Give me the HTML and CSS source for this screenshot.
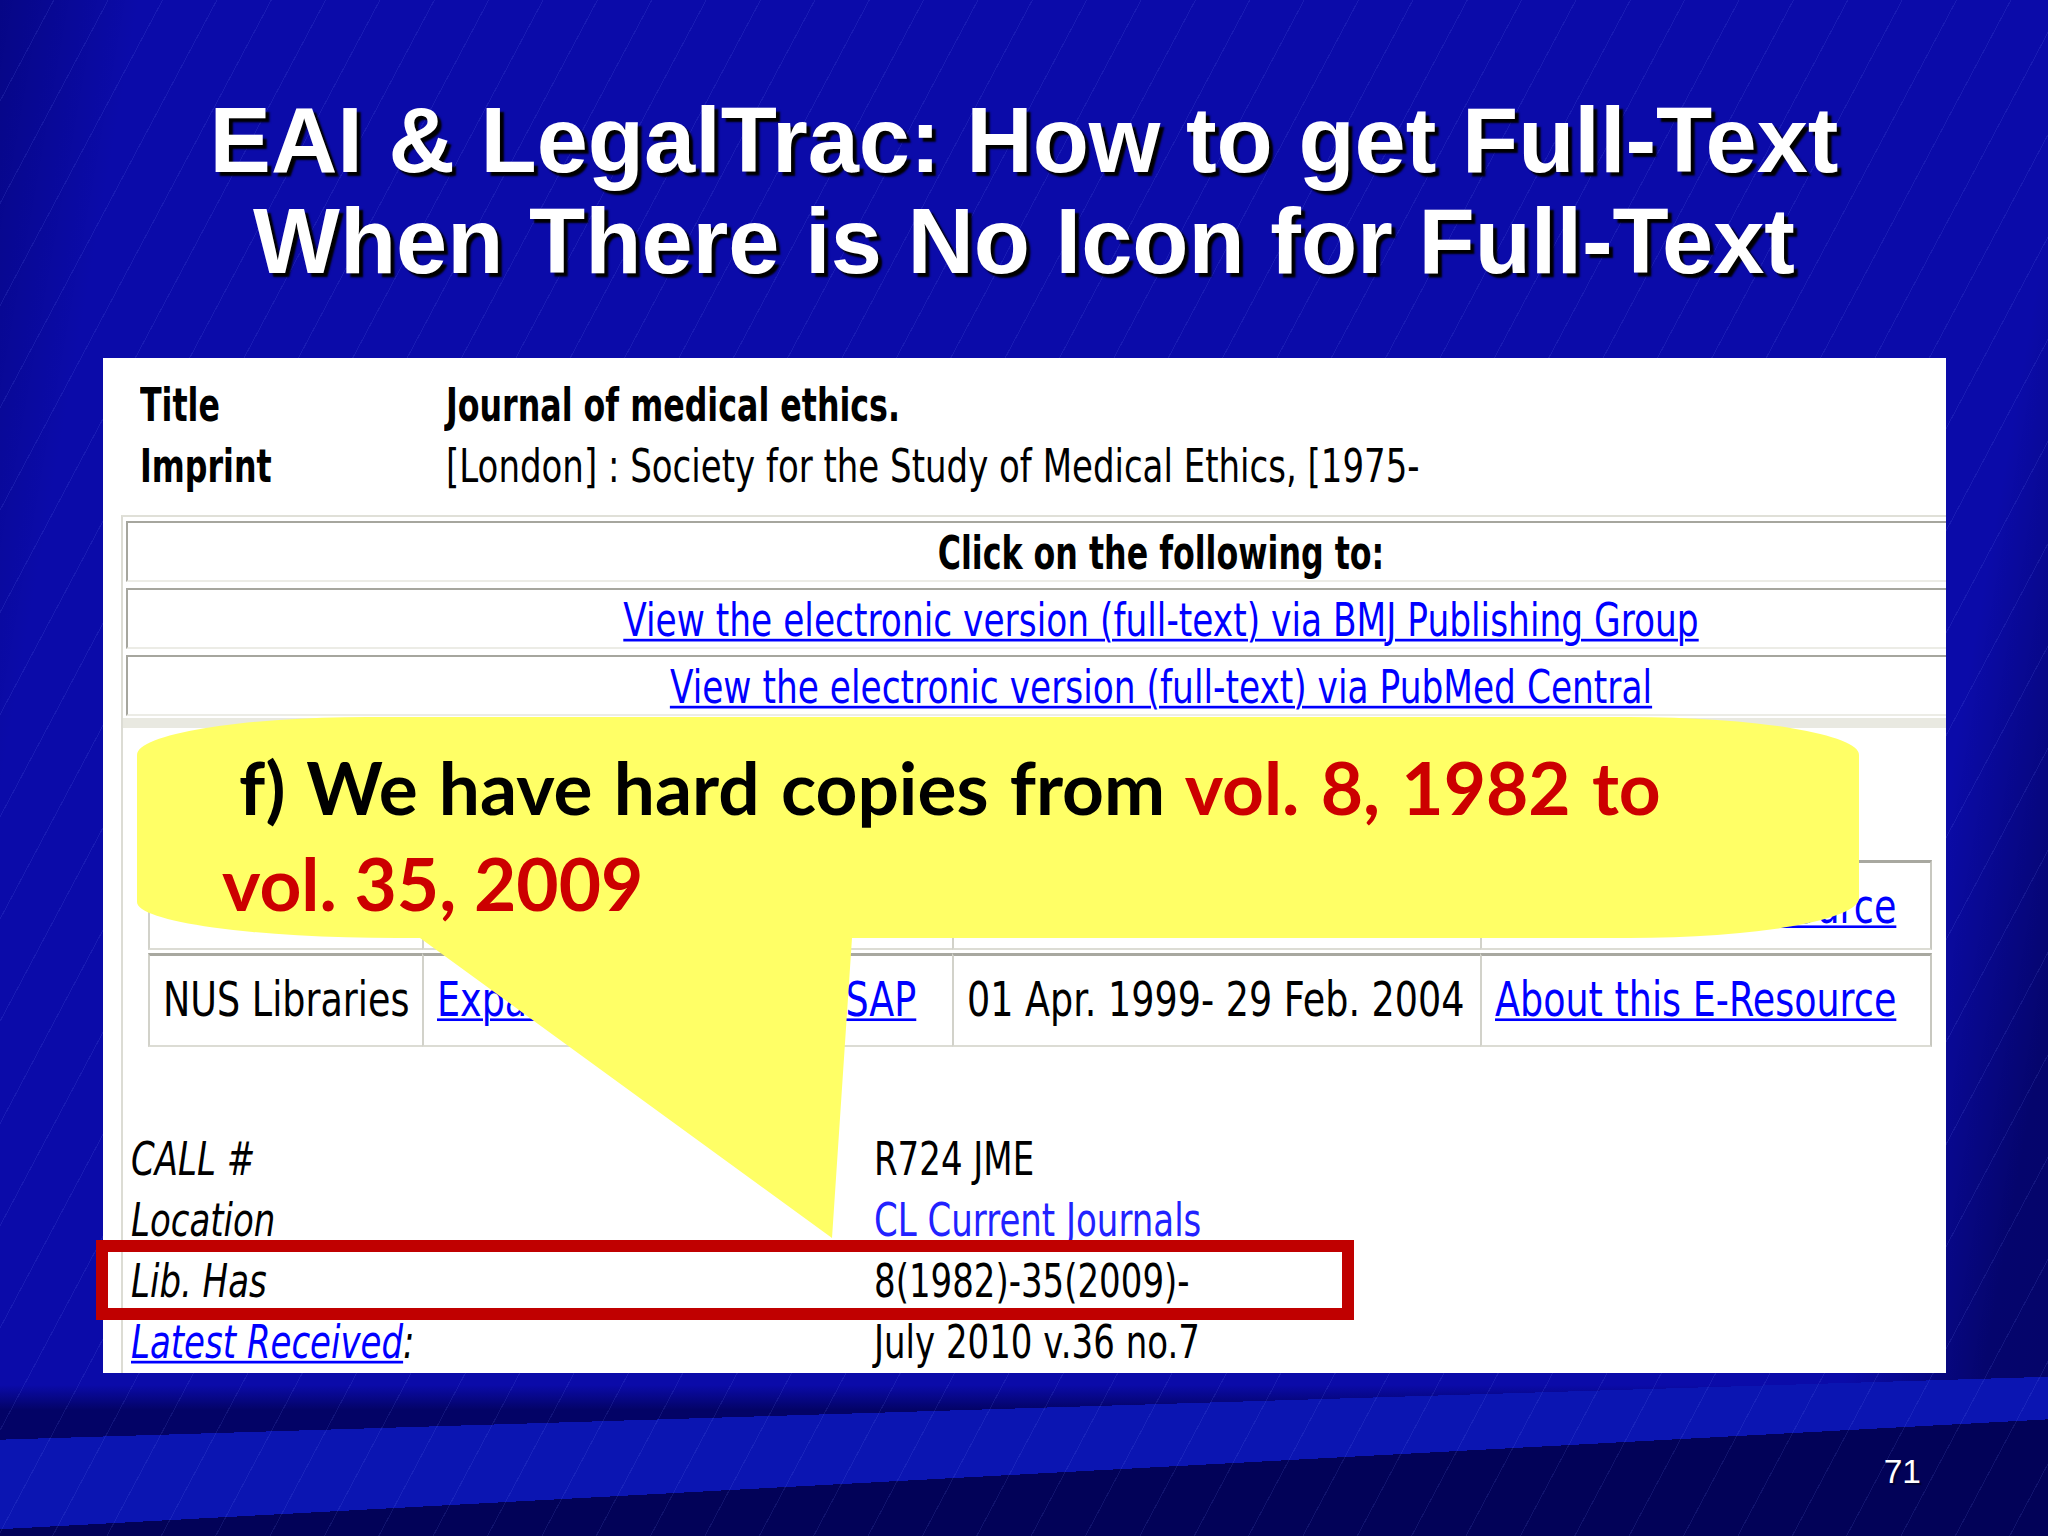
FILE: index.html
```html
<!DOCTYPE html>
<html lang="en">
<head>
<meta charset="utf-8">
<title>EAI &amp; LegalTrac: How to get Full-Text</title>
<link rel="stylesheet" href="styles.css">
</head>
<body>
<div class="slide">
  <h1 class="title">EAI &amp; LegalTrac: How to get Full-Text<br>When There is No Icon for Full-Text</h1>

  <div class="panel">
    <div class="biblio">
      <div class="row"><span class="t b">Title</span></div>
      <div class="row"><span class="t b">Journal of medical ethics.</span></div>
      <div class="row"><span class="t b">Imprint</span></div>
      <div class="row"><span class="t">[London] : Society for the Study of Medical Ethics, [1975-</span></div>
    </div>

    <div class="frame">
      <div class="links">
        <div class="lcell"><span class="t b">Click on the following to:</span></div>
        <div class="lcell"><a class="t lnk">View the electronic version (full-text) via BMJ Publishing Group</a></div>
        <div class="lcell"><a class="t lnk">View the electronic version (full-text) via PubMed Central</a></div>
      </div>
      <div class="band"></div>

      <div class="holdings">
        <div class="hrow r1">
          <div class="hcell c1"></div>
          <div class="hcell c2"></div>
          <div class="hcell c3"></div>
          <div class="hcell c4"><a class="t h lnk">About this E-Resource</a></div>
        </div>
        <div class="hrow r2">
          <div class="hcell c1"><span class="t h">NUS Libraries</span></div>
          <div class="hcell c2"><a class="t h lnk">Expanded Academic ASAP</a></div>
          <div class="hcell c3"><span class="t h">01 Apr. 1999- 29 Feb. 2004</span></div>
          <div class="hcell c4"><a class="t h lnk">About this E-Resource</a></div>
        </div>
      </div>

      <div class="items">
        <div class="row"><span class="t i">CALL #</span></div>
        <div class="row"><span class="t">R724 JME</span></div>
        <div class="row"><span class="t i">Location</span></div>
        <div class="row"><span class="t loc">CL Current Journals</span></div>
        <div class="row"><span class="t i">Lib. Has</span></div>
        <div class="row"><span class="t">8(1982)-35(2009)-</span></div>
        <div class="row"><span class="t i"><a class="lnk">Latest Received</a>:</span></div>
        <div class="row"><span class="t">July 2010 v.36 no.7</span></div>
      </div>
    </div>
  </div>

  <div class="pageno">71</div>

  <div class="callout">
    <svg class="bubble" width="1722" height="521" viewBox="0 0 1722 521" aria-hidden="true">
      <path d="M230 0 H1492 A230 38 0 0 1 1722 38 V181 A230 40 0 0 1 1492 221 H715 L695 521 L283 221 H260 A260 36 0 0 1 0 185 V38 A230 38 0 0 1 230 0 Z" fill="#ffff66"/>
    </svg>
    <p class="ctext"><span class="first">f) We have hard copies from <span class="red">vol. 8, 1982 to</span></span><br><span class="red">vol. 35, 2009</span></p>
  </div>

  <div class="redbox"></div>
</div>
</body>
</html>
```

FILE: styles.css
```css
html, body {
  margin: 0;
  padding: 0;
  background: #0b0ba9;
}

.slide {
  position: relative;
  width: 2048px;
  height: 1536px;
  overflow: hidden;
  display: flex;
  flex-direction: column;
  background:
    repeating-linear-gradient(118deg, rgba(120,140,255,0) 0 47px, rgba(120,140,255,0.12) 47px 48px),
    linear-gradient(176.93deg, rgba(2,2,88,0) 1527px, #020258 1527px),
    linear-gradient(178.24deg, rgba(12,22,180,0) 1439px, #0b15b2 1439px),
    linear-gradient(180deg, rgba(2,2,98,0) 1385px, #030366 1410px),
    linear-gradient(100deg, rgba(0,0,90,0.45) 0, rgba(0,0,90,0) 6%, rgba(0,0,90,0) 90%, rgba(0,0,60,0.55) 96%, rgba(0,0,60,0.6) 100%),
    #0b0ba9;
}

.title {
  margin: 0;
  padding-top: 90px;
  font-family: "Liberation Sans", Arial, sans-serif;
  font-weight: bold;
  font-size: 92px;
  line-height: 101px;
  color: #ffffff;
  text-align: center;
  text-shadow: 4px 4px 2px #000000;
}

/* ---------- catalogue screenshot panel ---------- */
.panel {
  flex-shrink: 0;
  box-sizing: border-box;
  width: 1843px;
  height: 1015px;
  margin: 66px 0 0 103px;
  padding-top: 21px;
  background: #ffffff;
  overflow: hidden;
  font-family: "DejaVu Sans", Verdana, sans-serif;
  font-size: 34px;
  color: #000000;
}

.t {
  display: inline-block;
  font-family: "DejaVu Sans", Verdana, sans-serif;
  font-size: 34px;
  line-height: 40px;
  white-space: nowrap;
  transform: scaleY(1.35);
  transform-origin: 0 31.76px;
}
.b {
  font-weight: bold;
  font-size: 31.7px;
  transform: scaleY(1.45);
  transform-origin: 0 30.97px;
}
.h {
  font-size: 36.5px;
  transform: scaleY(1.3);
  transform-origin: 0 32.6px;
}
.i { font-style: italic; }
.lnk {
  color: #0000ff;
  text-decoration: underline;
  text-decoration-thickness: 2px;
  text-underline-offset: 2px;
}
.lcell .lnk { font-size: 34.4px; }
.loc { color: #2222ff; }

.biblio {
  display: grid;
  grid-template-columns: 306px auto;
  padding-left: 37px;
}
.row {
  height: 61px;
  line-height: 61px;
}

.frame {
  box-sizing: border-box;
  width: 2080px;
  height: 870px;
  margin: 14px 0 0 18px;
  border-top: 2px solid #e0e0d8;
  border-left: 2px solid #dcdcd4;
}

.links {
  padding-top: 4px;
  display: flex;
  flex-direction: column;
  gap: 6px;
}
.lcell {
  box-sizing: border-box;
  width: 2070px;
  height: 61px;
  margin-left: 3px;
  padding-top: 14px;
  line-height: 40px;
  text-align: center;
  border-top: 2px solid #a6a69e;
  border-left: 2px solid #a6a69e;
  border-right: 2px solid #ececE6;
  border-bottom: 2px solid #ececE6;
}

.band {
  height: 10px;
  margin-top: 2px;
  background: #e9e9e1;
}

.holdings {
  width: 1784px;
  margin: 132px 0 0 25px;
  display: flex;
  flex-direction: column;
  gap: 3px;
}
.hrow {
  display: flex;
}
.r1 { height: 90px; }
.r2 { height: 94px; }
.hcell {
  box-sizing: border-box;
  height: 100%;
  padding: 28px 0 0 13px;
  line-height: 40px;
  border-top: 3px solid #a8a8a0;
  border-left: 2px solid #d2d2ca;
  border-bottom: 2px solid #dcdcd4;
}
.c1 { width: 274px; }
.c2 { width: 530px; }
.c3 { width: 528px; }
.c4 { width: 452px; border-right: 2px solid #c8c8c0; }

.items {
  margin-top: 86px;
  padding-left: 8px;
  display: grid;
  grid-template-columns: 743px auto;
}

/* ---------- overlays ---------- */
.pageno {
  align-self: flex-end;
  margin-top: 80px;
  padding-right: 127px;
  font-family: "Liberation Sans", Arial, sans-serif;
  font-size: 33.5px;
  line-height: 38px;
  color: #ffffff;
  text-shadow: 2px 2px 1px #000033;
}

.callout {
  position: absolute;
  left: 137px;
  top: 717px;
  width: 1722px;
  height: 521px;
}
.bubble {
  position: absolute;
  left: 0;
  top: 0;
}
.ctext {
  position: relative;
  margin: 0;
  padding: 22px 0 0 85px;
  font-family: Lato, "Open Sans", sans-serif;
  font-weight: bold;
  font-size: 73px;
  line-height: 96px;
  color: #000000;
  white-space: nowrap;
}
.first {
  margin-left: 17px;
  word-spacing: 3.5px;
}
.red { color: #cc0000; }

.redbox {
  position: absolute;
  left: 96px;
  top: 1240px;
  width: 1258px;
  height: 80px;
  box-sizing: border-box;
  border: 12px solid #c00000;
}
```
